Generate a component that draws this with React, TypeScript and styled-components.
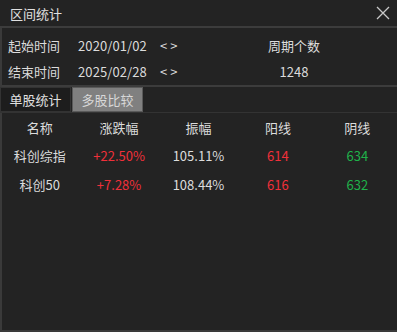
import React from 'react'
import styled, { createGlobalStyle } from 'styled-components'

const GlobalStyle = createGlobalStyle`
  html, body {
    margin: 0;
    padding: 0;
    background: #232323;
  }
  body {
    font-family: "Microsoft YaHei", "Noto Sans CJK SC", "Liberation Sans", sans-serif;
    font-size: 13px;
    color: #dcdcdc;
  }
`;

const rows = [
  { name: '科创综指', change: '+22.50%', amp: '105.11%', up: '614', down: '634' },
  { name: '科创50', change: '+7.28%', amp: '108.44%', up: '616', down: '632' },
];

export default function App() {
  return (
    <Window>
      <GlobalStyle />
      <TitleBar>
        <Title>区间统计</Title>
        <Close>
          <svg width="14" height="14" viewBox="0 0 14 14">
            <path d="M1 1L13 13M13 1L1 13" stroke="#c8c8c8" strokeWidth="1.3" />
          </svg>
        </Close>
      </TitleBar>
      <Body>
        <RangePanel>
          <RangeRow>
            <Label>起始时间</Label>
            <DateText>2020/01/02</DateText>
            <Arrows>&lt; &gt;</Arrows>
            <CountCell>周期个数</CountCell>
          </RangeRow>
          <RangeRow>
            <Label>结束时间</Label>
            <DateText>2025/02/28</DateText>
            <Arrows>&lt; &gt;</Arrows>
            <CountCell>1248</CountCell>
          </RangeRow>
        </RangePanel>
        <Tabs>
          <Tab>单股统计</Tab>
          <Tab $active>多股比较</Tab>
        </Tabs>
        <Table>
          <HeaderRow>
            <Cell>名称</Cell>
            <Cell>涨跌幅</Cell>
            <Cell>振幅</Cell>
            <Cell>阳线</Cell>
            <Cell>阴线</Cell>
          </HeaderRow>
          {rows.map((r) => (
            <DataRow key={r.name}>
              <Cell>{r.name}</Cell>
              <Cell $tone="up">{r.change}</Cell>
              <Cell>{r.amp}</Cell>
              <Cell $tone="up">{r.up}</Cell>
              <Cell $tone="down">{r.down}</Cell>
            </DataRow>
          ))}
        </Table>
      </Body>
    </Window>
  );
}

const Window = styled.div`
  width: 397px;
  height: 332px;
  box-sizing: border-box;
  display: flex;
  flex-direction: column;
  background: #232323;
  overflow: hidden;
`;

const TitleBar = styled.div`
  display: flex;
  align-items: center;
  justify-content: space-between;
  padding: 0 6px 0 10px;
  border-bottom: 2px solid #3c3c3c;
  box-sizing: border-box;
  height: 28px;
`;

const Title = styled.div`
  font-size: 13px;
  color: #e0e0e0;
`;

const Close = styled.div`
  width: 16px;
  height: 16px;
  display: flex;
  align-items: center;
  justify-content: center;
`;

const Body = styled.div`
  flex: 1;
  display: flex;
  flex-direction: column;
  border-left: 2px solid #3a3a3a;
  border-bottom: 2px solid #3a3a3a;
`;

const RangePanel = styled.div`
  display: flex;
  flex-direction: column;
  padding-top: 4px;
  border-bottom: 2px solid #3c3c3c;
  height: 59px;
  box-sizing: border-box;
`;

const RangeRow = styled.div`
  height: 27px;
  display: flex;
  align-items: center;
  padding-left: 6px;
`;

const Label = styled.span`
  width: 70px;
`;

const DateText = styled.span`
  width: 82px;
  letter-spacing: 0.1px;
`;

const Arrows = styled.span`
  width: 94px;
`;

const CountCell = styled.span`
  width: 80px;
  text-align: center;
`;

const Tabs = styled.div`
  display: flex;
  height: 25px;
  gap: 1px;
  margin-left: -2px;
  border-bottom: 1px solid #333;
`;

const Tab = styled.div<{ $active?: boolean }>`
  width: 71px;
  display: flex;
  align-items: center;
  justify-content: center;
  box-sizing: border-box;
  background: ${({ $active }) => ($active ? '#808080' : '#1d1d1d')};
  color: ${({ $active }) => ($active ? '#d8d8d8' : '#e0e0e0')};
  border: 1px solid ${({ $active }) => ($active ? '#5a5a5a' : '#333')};
`;

const Table = styled.div`
  display: flex;
  flex-direction: column;
`;

const HeaderRow = styled.div`
  display: grid;
  grid-template-columns: repeat(5, 1fr);
  height: 28px;
  align-items: center;
  margin-left: -2px;
`;

const DataRow = styled(HeaderRow)`
  height: 29px;
`;

const Cell = styled.div<{ $tone?: 'up' | 'down' }>`
  text-align: center;
  color: ${({ $tone }) => ($tone === 'up' ? '#f0303a' : $tone === 'down' ? '#1fb24a' : '#dcdcdc')};
`;
